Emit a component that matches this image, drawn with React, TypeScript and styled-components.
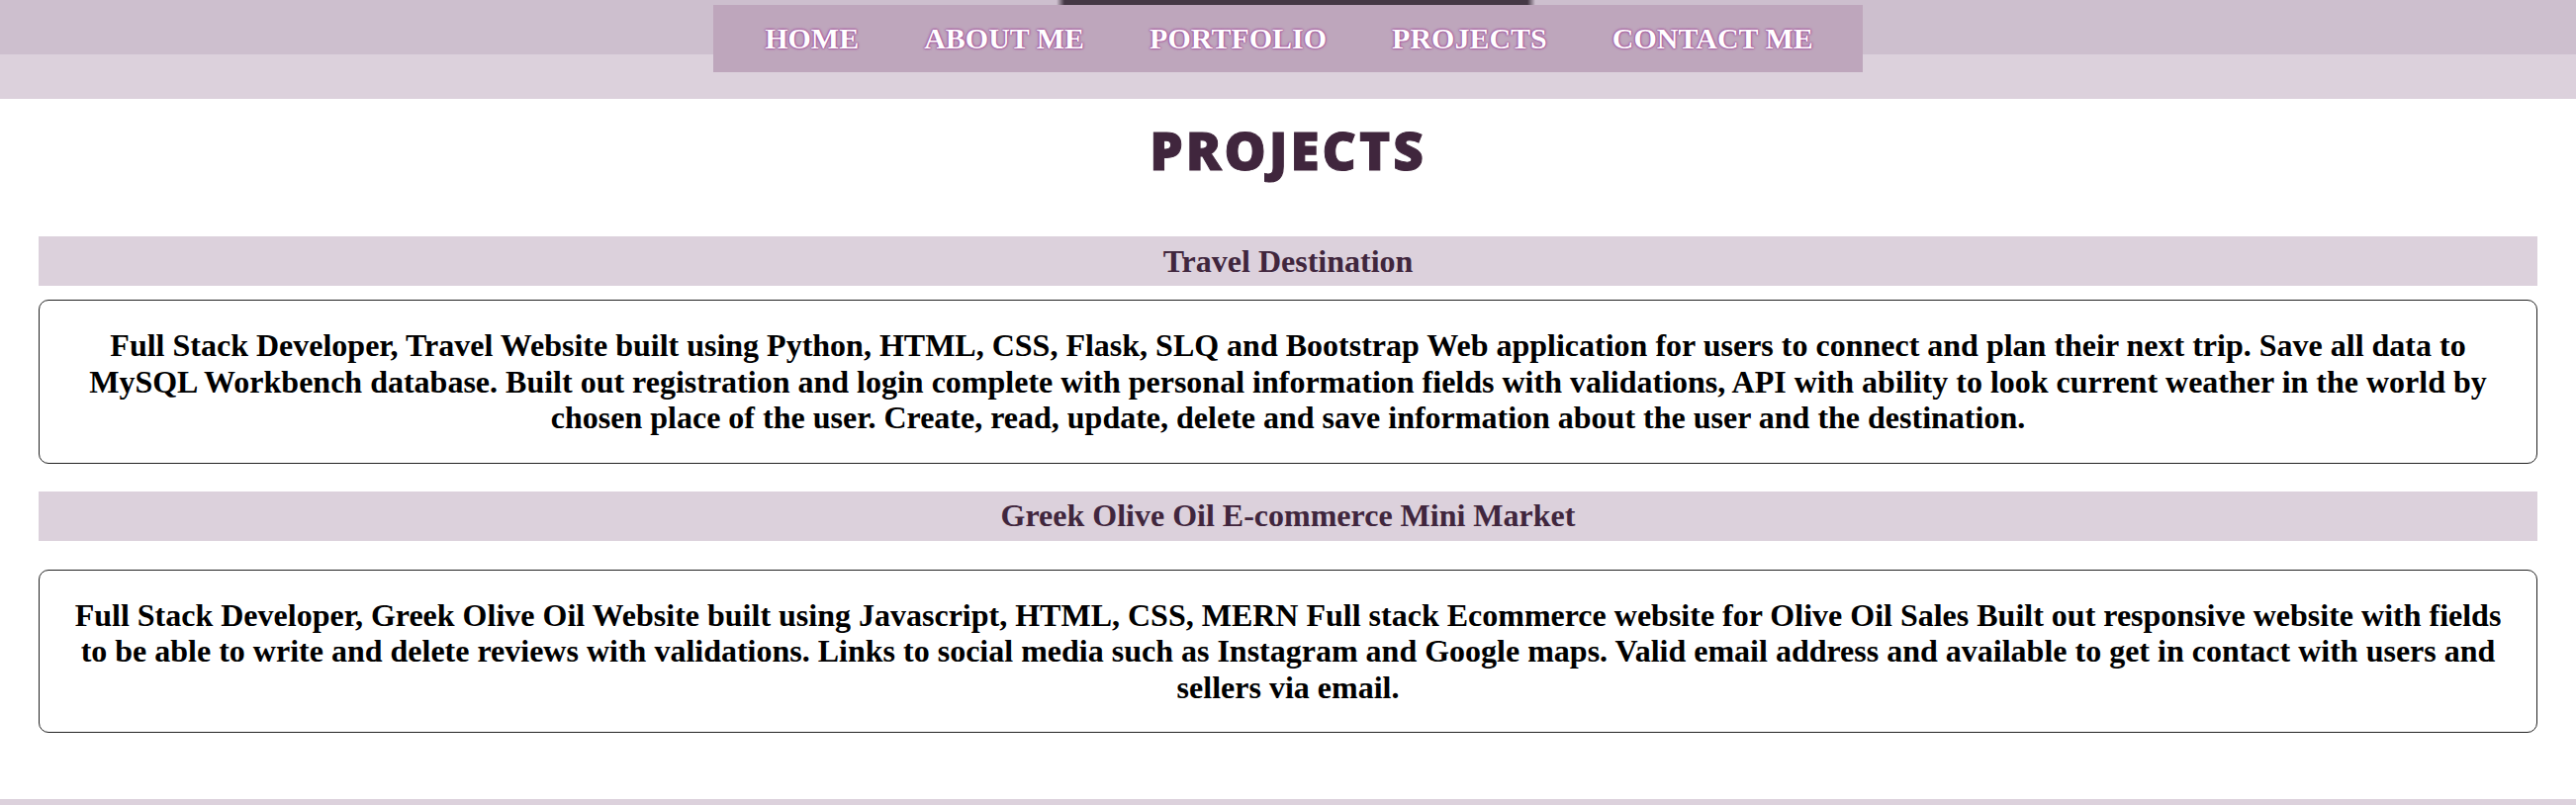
import React from 'react';
import styled, { createGlobalStyle } from 'styled-components';

const GlobalStyle = createGlobalStyle`
  html, body {
    margin: 0;
    padding: 0;
    background: #ffffff;
  }
  body {
    font-family: 'Liberation Serif', 'Times New Roman', serif;
    min-height: 814px;
  }
  #root {
    min-height: 814px;
    display: flex;
    flex-direction: column;
  }
`;

const Header = styled.header`
  position: relative;
  height: 100px;
  box-sizing: border-box;
  padding-top: 5px;
  display: flex;
  justify-content: center;
  align-items: flex-start;
  background: linear-gradient(#cdbfce 0 55px, #dcd1dc 55px 100px);
`;

// dark strip peeking out above the nav (bottom edge of the banner image)
const BannerEdge = styled.div`
  position: absolute;
  top: 0;
  left: calc(50% - 234px);
  width: 484px;
  height: 6px;
  background: linear-gradient(
    to right,
    rgba(69, 56, 69, 0),
    #453845 8px,
    #453845 calc(100% - 8px),
    rgba(69, 56, 69, 0)
  );
`;

const Nav = styled.nav`
  position: relative;
  height: 68px;
  box-sizing: border-box;
  padding: 0 50px 0 52px;
  display: flex;
  align-items: center;
  gap: 66px;
  background: #bea6bc;
`;

const NavLink = styled.a`
  font-family: 'Liberation Serif', 'Times New Roman', serif;
  font-weight: bold;
  font-size: 30px;
  color: #ffffff;
  text-decoration: none;
  white-space: nowrap;
  text-shadow: 0 0 3px #9c3f95, 0 0 2px #9c3f95, 0 0 1px #9c3f95;
`;

const Main = styled.main`
  flex: 1;
  padding: 0 39px;
  display: flex;
  flex-direction: column;
`;

const PageTitle = styled.h1`
  margin: 26px 0 61px;
  text-align: center;
  font-family: 'Open Sans', 'Noto Sans', sans-serif;
  font-weight: 800;
  font-size: 53px;
  line-height: 52px;
  letter-spacing: 3px;
  color: #40263d;
  -webkit-text-stroke: 1px #40263d;
`;

const ProjectBar = styled.h2`
  margin: 0;
  height: 50px;
  display: flex;
  align-items: center;
  justify-content: center;
  background: #dcd1dc;
  font-family: 'Liberation Serif', 'Times New Roman', serif;
  font-weight: bold;
  font-size: 32px;
  color: #40263d;
`;

const ProjectBox = styled.div<{ $top: number }>`
  margin: ${(p) => p.$top}px 0 28px;
  padding: 27px 32px;
  border: 1px solid #222222;
  border-radius: 10px;
  text-align: center;
  font-family: 'Liberation Serif', 'Times New Roman', serif;
  font-weight: bold;
  font-size: 32px;
  line-height: 36.5px;
  color: #000000;
`;

const Footer = styled.footer`
  margin-top: 39px;
  height: 6px;
  background: #dcd1dc;
`;

const links = ['HOME', 'ABOUT ME', 'PORTFOLIO', 'PROJECTS', 'CONTACT ME'];

const projects = [
  {
    title: 'Travel Destination',
    top: 14,
    text: 'Full Stack Developer, Travel Website built using Python, HTML, CSS, Flask, SLQ and Bootstrap Web application for users to connect and plan their next trip. Save all data to MySQL Workbench database. Built out registration and login complete with personal information fields with validations, API with ability to look current weather in the world by chosen place of the user. Create, read, update, delete and save information about the user and the destination.',
  },
  {
    title: 'Greek Olive Oil E-commerce Mini Market',
    top: 29,
    text: 'Full Stack Developer, Greek Olive Oil Website built using Javascript, HTML, CSS, MERN Full stack Ecommerce website for Olive Oil Sales Built out responsive website with fields to be able to write and delete reviews with validations. Links to social media such as Instagram and Google maps. Valid email address and available to get in contact with users and sellers via email.',
  },
];

function App() {
  return (
    <>
      <GlobalStyle />
      <Header>
        <BannerEdge />
        <Nav>
          {links.map((l) => (
            <NavLink key={l} href="#">
              {l}
            </NavLink>
          ))}
        </Nav>
      </Header>
      <Main>
        <PageTitle>PROJECTS</PageTitle>
        {projects.map((p) => (
          <section key={p.title}>
            <ProjectBar>{p.title}</ProjectBar>
            <ProjectBox $top={p.top}>{p.text}</ProjectBox>
          </section>
        ))}
      </Main>
      <Footer />
    </>
  );
}

export default App;
